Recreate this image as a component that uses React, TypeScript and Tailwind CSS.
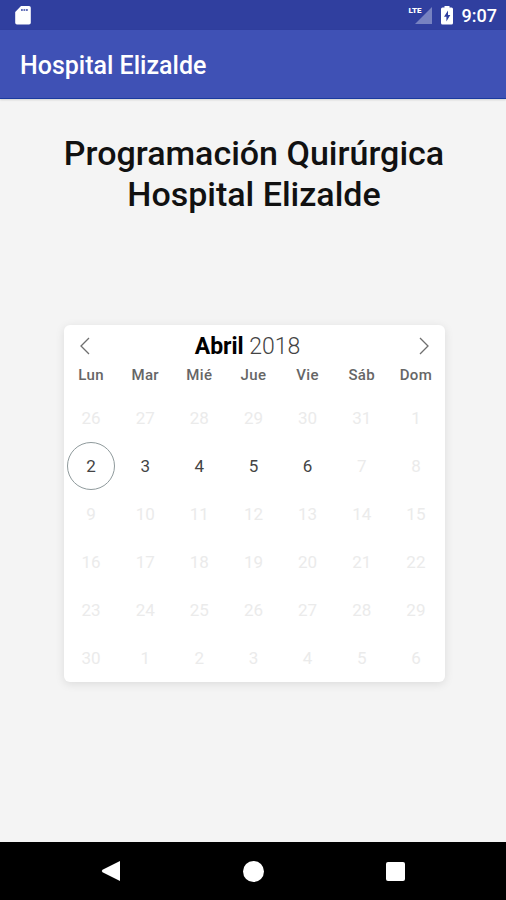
import { useState } from "react";

interface Day {
  num: number;
  month: number;
}

const WEEKDAYS = ["Lun", "Mar", "Mié", "Jue", "Vie", "Sáb", "Dom"];
const ENABLED = [2, 3, 4, 5, 6];

// 26 mar -> 6 may 2018
const START = new Date(2018, 2, 26);

const weeks: Day[][] = Array.from({ length: 6 }, (_, w) =>
  Array.from({ length: 7 }, (_, d) => {
    const date = new Date(START.getFullYear(), START.getMonth(), START.getDate() + w * 7 + d);
    return { num: date.getDate(), month: date.getMonth() };
  })
);

function StatusBar() {
  return (
    <div className="h-[30px] bg-[#303f9f] pl-[15px] pr-[9px] flex items-center justify-between text-white">
      <svg width="16" height="20" viewBox="0 0 16 20" fill="currentColor" aria-hidden="true">
        <path d="M6 1h8a1.800 1.800 0 0 1 1.800 1.800v15a1.800 1.800 0 0 1-1.800 1.800H2a1.800 1.800 0 0 1-1.800-1.800V7z" />
        <path d="M6 4h1.800v2H6zM8.500 4h1.800v2H8.500zM11 4h1.800v2H11z" fill="#6470b8" />
      </svg>
      <div className="flex items-center">
        <div className="flex h-[20px]">
          <span className="text-[8px] leading-[12px] font-black">LTE</span>
          <svg className="-ml-2" width="18" height="20" viewBox="0 0 18 20" aria-hidden="true">
            <path d="M18 2v17H1z" fill="#7782c1" />
          </svg>
        </div>
        <svg className="ml-[9px]" width="12" height="20" viewBox="0 0 12 20" aria-hidden="true">
          <path
            d="M3.500 1h5v1.500h2A1.500 1.500 0 0 1 12 4v14a1.500 1.500 0 0 1-1.500 1.500h-9A1.500 1.500 0 0 1 0 18V4a1.500 1.500 0 0 1 1.500-1.500h2z"
            fill="#fff"
          />
          <path d="M7 5.500 3 11.800h2.400V16.500L9.300 10H7z" fill="#303f9f" />
        </svg>
        <span className="ml-[9px] pt-[2px] text-[18px] leading-[20px] font-medium">9:07</span>
      </div>
    </div>
  );
}

function Chevron({ d }: { d: string }) {
  return (
    <svg width="10" height="18" viewBox="0 0 10 18" fill="none" stroke="#6f6f6f" aria-hidden="true">
      <path d={d} strokeWidth="1.300" />
    </svg>
  );
}

function Calendar() {
  const [selected, setSelected] = useState(2);

  return (
    <section className="bg-white rounded-[6px] shadow-[0_2px_10px_rgba(0,0,0,0.1)]">
      <div className="h-[42px] px-4 flex items-center justify-between">
        <button aria-label="Mes anterior">
          <Chevron d="M9 1 1 9l8 8" />
        </button>
        <h2 className="pr-[14px] pt-[2px] text-[23px] leading-[28px] font-light text-[#444]">
          <span className="font-bold text-black">Abril</span> 2018
        </h2>
        <button aria-label="Mes siguiente">
          <Chevron d="m1 1 8 8-8 8" />
        </button>
      </div>
      <div className="pr-[2px]">
        <table className="w-full table-fixed border-collapse text-center">
          <thead>
            <tr className="h-[27px]">
              {WEEKDAYS.map((name) => (
                <th key={name} className="p-0 pb-[10px] text-[15px] leading-[17px] font-medium tracking-wide text-[#666]">
                  {name}
                </th>
              ))}
            </tr>
          </thead>
          <tbody>
            {weeks.map((week, i) => (
              <tr key={i}>
                {week.map((day) => {
                  const enabled = day.month === 3 && ENABLED.includes(day.num);
                  const active = enabled && day.num === selected;
                  return (
                    <td key={`${day.month}-${day.num}`} className="p-0">
                      <button
                        disabled={!enabled}
                        onClick={() => setSelected(day.num)}
                        className={`size-12 mx-auto pt-[2px] flex items-center justify-center rounded-full border text-[17px] ${
                          active ? "border-[#8f9a9c]" : "border-transparent"
                        } ${enabled ? "text-[#444]" : "text-[#ebebeb]"}`}
                      >
                        {day.num}
                      </button>
                    </td>
                  );
                })}
              </tr>
            ))}
          </tbody>
        </table>
      </div>
    </section>
  );
}

function NavBar() {
  return (
    <nav className="h-[58px] bg-black px-10 grid grid-cols-3 items-center justify-items-center">
      <button aria-label="Atrás">
        <svg width="20" height="22" viewBox="0 0 20 22" fill="#fff">
          <path d="M19 1v20L1.500 12.200q-1.500-1.200 0-2.400z" />
        </svg>
      </button>
      <button aria-label="Inicio" className="size-[21px] rounded-full bg-white" />
      <button aria-label="Recientes" className="size-[19px] rounded-[2px] bg-white" />
    </nav>
  );
}

export default function App() {
  return (
    <div className="min-h-screen flex flex-col bg-[#f4f4f4] font-['Roboto',sans-serif]">
      <StatusBar />
      <header className="h-[69px] bg-[#3f51b5] border-b border-[#1a3a9f] px-5 pt-[4px] flex items-center shadow-[0_1px_2px_rgba(0,0,0,0.15)]">
        <span className="text-[25px] leading-[28px] font-medium text-white">Hospital Elizalde</span>
      </header>
      <main className="flex-1 pt-[34px]">
        <h1 className="pl-[2px] text-center text-[34px] leading-[41px] font-medium text-[#111]">
          Programación Quirúrgica
          <br />
          Hospital Elizalde
        </h1>
        <div className="mt-[110px] pl-[64px] pr-[61px]">
          <Calendar />
        </div>
      </main>
      <NavBar />
    </div>
  );
}
